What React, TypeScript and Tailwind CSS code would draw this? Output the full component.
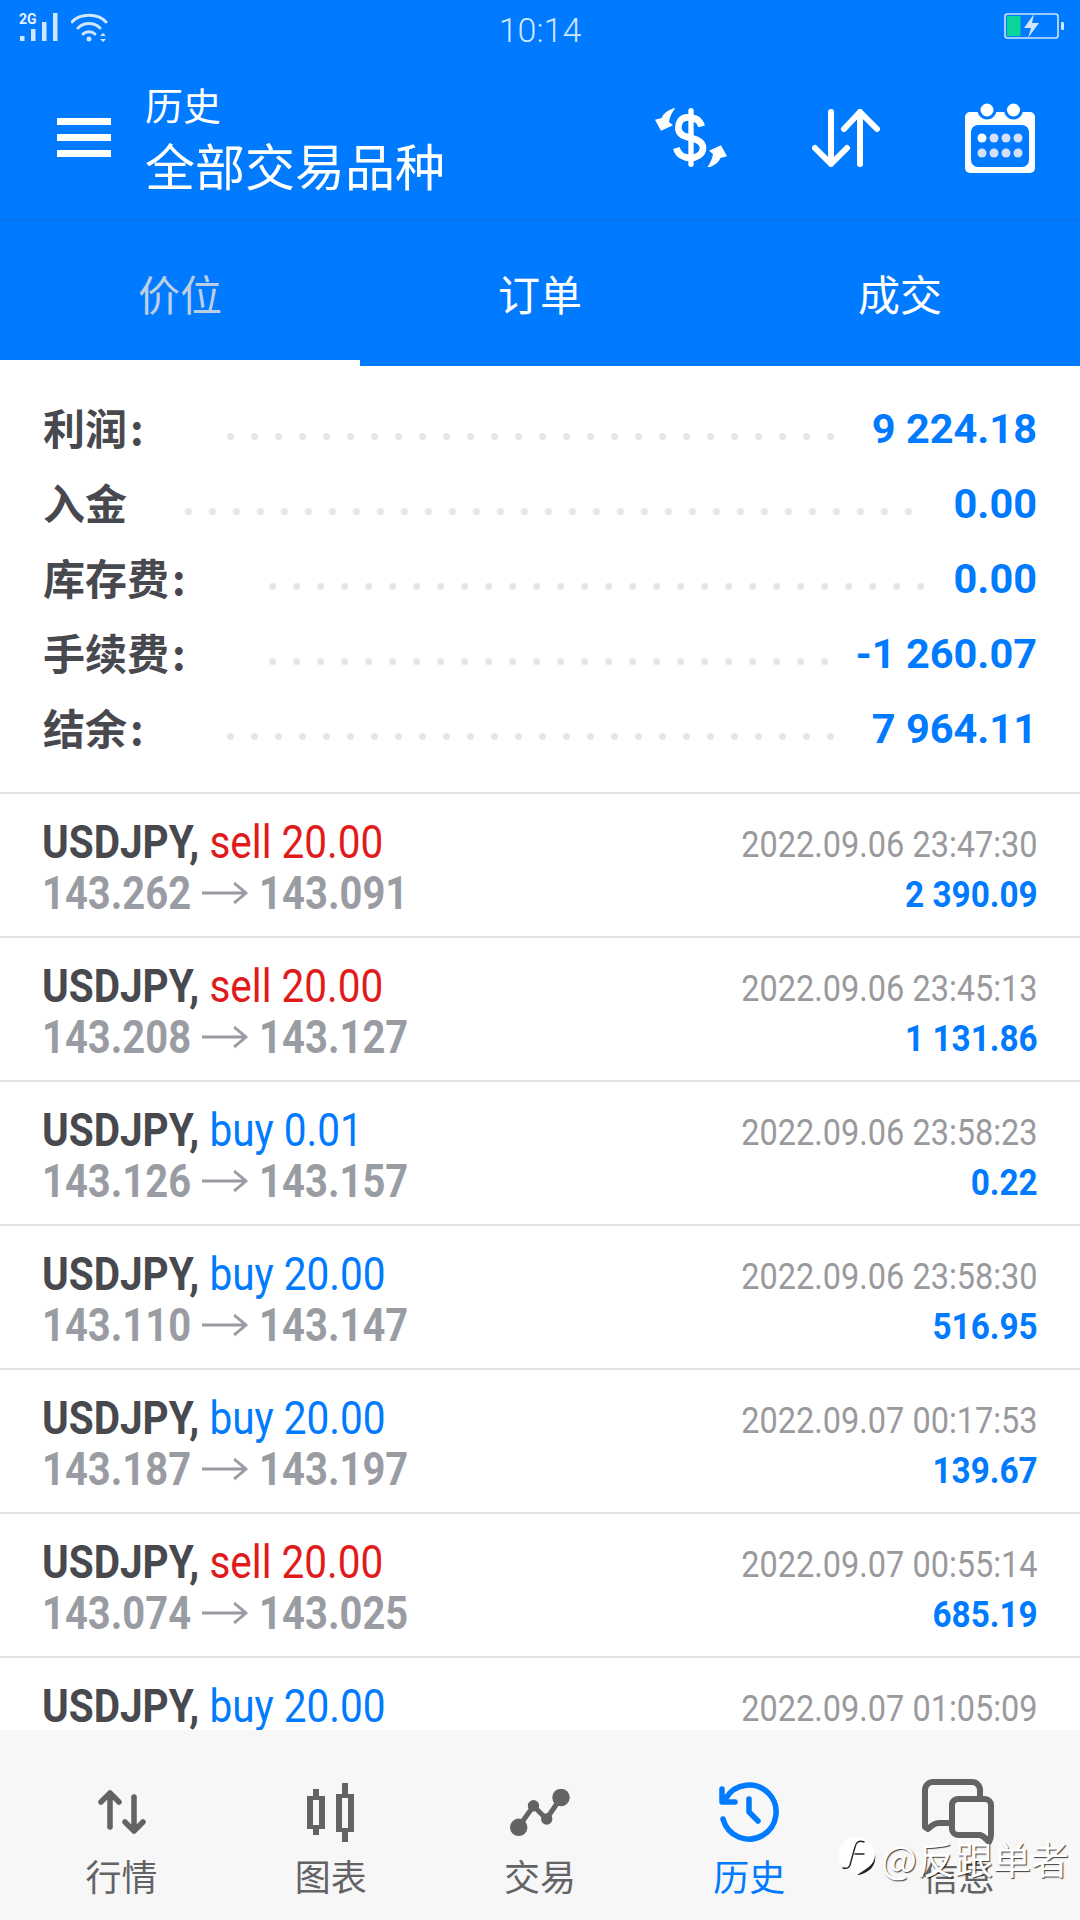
import { ReactNode } from "react";

const CJK = "font-['Noto_Sans_CJK_SC','Noto_Sans',sans-serif]";

const SUMMARY = [
  { label: "利润", colon: true, value: "9 224.18", dotsFrom: 230, dots: 26 },
  { label: "入金", colon: false, value: "0.00", dotsFrom: 188, dots: 31 },
  { label: "库存费", colon: true, value: "0.00", dotsFrom: 272, dots: 28 },
  { label: "手续费", colon: true, value: "-1 260.07", dotsFrom: 272, dots: 24 },
  { label: "结余", colon: true, value: "7 964.11", dotsFrom: 230, dots: 26 },
];

type Deal = { side: string; lots: string; time: string; open?: string; close?: string; profit?: string };

const DEALS: Deal[] = [
  { side: "sell", lots: "20.00", open: "143.262", close: "143.091", time: "2022.09.06 23:47:30", profit: "2 390.09" },
  { side: "sell", lots: "20.00", open: "143.208", close: "143.127", time: "2022.09.06 23:45:13", profit: "1 131.86" },
  { side: "buy", lots: "0.01", open: "143.126", close: "143.157", time: "2022.09.06 23:58:23", profit: "0.22" },
  { side: "buy", lots: "20.00", open: "143.110", close: "143.147", time: "2022.09.06 23:58:30", profit: "516.95" },
  { side: "buy", lots: "20.00", open: "143.187", close: "143.197", time: "2022.09.07 00:17:53", profit: "139.67" },
  { side: "sell", lots: "20.00", open: "143.074", close: "143.025", time: "2022.09.07 00:55:14", profit: "685.19" },
  { side: "buy", lots: "20.00", time: "2022.09.07 01:05:09" },
];

function SignalIcon() {
  return (
    <svg width="40" height="30" viewBox="0 0 40 30" fill="#cfe6ff" overflow="visible">
      <text x="0" y="10.5" fontSize="14" fontFamily="Roboto" fontWeight="700" fill="#e6f2ff">2G</text>
      <rect x="1" y="23" width="4.5" height="5" />
      <rect x="12" y="16" width="4.5" height="12" />
      <rect x="23" y="9" width="4.5" height="19" />
      <rect x="34" y="0" width="4.5" height="28" />
    </svg>
  );
}

function WifiIcon() {
  return (
    <svg width="38" height="30" viewBox="0 0 38 30" fill="none" stroke="#cfe6ff" strokeWidth="3" strokeLinecap="round">
      <path d="M1 9C9 0 27 0 35 9" />
      <path d="M7 15C13 9 23 9 29 15" />
      <path d="M12 21C15 18 21 18 24 21" />
      <circle cx="18" cy="26" r="2.5" fill="#cfe6ff" stroke="none" />
      <path d="M29 23l3-3 3 3zM29 26l3 3 3-3z" fill="#cfe6ff" stroke="none" />
    </svg>
  );
}

function BatteryIcon() {
  return (
    <svg width="60" height="26" viewBox="0 0 60 26">
      <rect x="1" y="1" width="53" height="24" rx="2.5" fill="none" stroke="#cfe6ff" strokeWidth="1.6" />
      <rect x="3" y="3" width="13.5" height="20" fill="#0bd69a" />
      <rect x="57" y="9" width="3" height="8" rx="1" fill="#cfe6ff" />
      <path d="M30 1L20 15h7l-3 10 11-15h-7z" fill="#cfe6ff" />
    </svg>
  );
}

function ExchangeIcon() {
  return (
    <svg width="72" height="59" viewBox="42 40 216 177" fill="#fff">
      <path
        d="M182 95C176 72 156 68 140 68C118 68 112 85 112 100C112 120 130 125 150 130C172 135 186 145 186 160C186 180 165 190 148 190C130 190 112 182 106 160"
        fill="none"
        stroke="#fff"
        strokeWidth="20"
      />
      <rect x="142" y="40" width="16" height="177" rx="8" />
      <path d="M103 40C84 44 66 56 62 70L42 75L60 108L96 92L84 82C86 68 92 54 103 40Z" />
      <path d="M197 220C216 216 234 204 238 190L258 185L240 152L204 168L216 178C214 192 208 206 197 220Z" />
    </svg>
  );
}

function SortIcon() {
  return (
    <svg width="68" height="58" viewBox="0 0 68 58" fill="none" stroke="#fff" strokeWidth="6" strokeLinecap="round" strokeLinejoin="round">
      <path d="M19 3v52M3 39l16 16 16-16" />
      <path d="M48 55V3M32 20L48 3l17 17" />
    </svg>
  );
}

function CalendarIcon() {
  const dots = [0, 1, 2, 3];
  return (
    <svg width="70" height="70" viewBox="0 0 70 70">
      <path fill="#fff" d="M5 9h60a5 5 0 0 1 5 5v51a5 5 0 0 1-5 5H5a5 5 0 0 1-5-5V14a5 5 0 0 1 5-5z" />
      <circle cx="22" cy="7" r="8" fill="#fff" stroke="#007aff" strokeWidth="3" />
      <circle cx="48.5" cy="7" r="8" fill="#fff" stroke="#007aff" strokeWidth="3" />
      <rect x="6" y="22" width="58" height="42" rx="7" fill="#007aff" />
      {dots.map((i) => (
        <circle key={`t${i}`} cx={17 + i * 12} cy="35" r="4.5" fill={i === 0 ? "#fff" : "#d3e0f7"} />
      ))}
      {dots.map((i) => (
        <circle key={`b${i}`} cx={17 + i * 12} cy="50" r="4.5" fill="#d3e0f7" />
      ))}
    </svg>
  );
}

function QuotesIcon() {
  return (
    <svg width="48" height="44" viewBox="0 0 48 44" fill="none" stroke="#636366" strokeLinecap="round" strokeLinejoin="round" strokeWidth="5.5">
      <path d="M12 37V3M3 12l9-9 9 9" />
      <path d="M36 7v34M27 32l9 9 9-9" />
    </svg>
  );
}

function ChartIcon() {
  return (
    <svg width="47" height="59" viewBox="0 0 47 59" fill="#636366">
      <rect x="6" y="6" width="6" height="46" />
      <rect x="0" y="13" width="18" height="33" />
      <rect x="6" y="17" width="6" height="25" fill="#f7f7f7" />
      <rect x="35" y="0" width="6" height="59" />
      <rect x="29" y="11" width="18" height="38" />
      <rect x="35" y="15" width="6" height="30" fill="#f7f7f7" />
    </svg>
  );
}

function TradeIcon() {
  return (
    <svg width="60" height="47" viewBox="0 0 60 47" fill="#636366">
      <path d="M8.5 38L23.5 17l13 13L51 8.5" fill="none" stroke="#636366" strokeWidth="5" />
      <circle cx="8.7" cy="38.3" r="8.7" />
      <circle cx="23.5" cy="16.7" r="5.7" />
      <circle cx="36.7" cy="30" r="5.7" />
      <circle cx="51" cy="8.5" r="8.7" />
    </svg>
  );
}

function HistoryIcon() {
  return (
    <svg width="62" height="62" viewBox="0 0 62 62" fill="none" stroke="#007aff" strokeWidth="5.5" strokeLinecap="round" strokeLinejoin="round">
      <path d="M5 38A27 27 0 1 0 8 17" />
      <path d="M4 8v13h13" />
      <path d="M31 18v13l9 9" />
    </svg>
  );
}

function MessageIcon() {
  return (
    <svg width="72" height="66" viewBox="0 0 72 66" fill="none" stroke="#636366" strokeWidth="6" strokeLinejoin="round">
      <path d="M58 17V11a8 8 0 0 0-8-8H11a8 8 0 0 0-8 8v37l3 2c3-3 6-6 11-6h13" />
      <path d="M37 20h26a6 6 0 0 1 6 6v30c0 3-1 5-2 7-3-3-5-6-9-7H36a6 6 0 0 1-6-6V26a6 6 0 0 1 7-6z" />
    </svg>
  );
}

function ZhihuMark() {
  return (
    <svg width="38" height="44" viewBox="0 0 38 44" fill="none">
      <circle cx="18.5" cy="18" r="18" fill="#fff" />
      <path d="M26 5c-5-2-8 0-9 5l-5 18c-1 3-3 4-7 3M17 17h9" stroke="#222" strokeWidth="1.4" strokeLinecap="round" />
      <path d="M37 17c0 6-2 10-9 15-3 2-6 4-9 6 4 0 8-2 11-4 6-4 8-10 7-17z" fill="#222" />
    </svg>
  );
}

function NavItem({ icon, label, active }: { icon: ReactNode; label: string; active?: boolean }) {
  return (
    <div className="flex flex-col items-center">
      <div className="flex h-[84px] items-center justify-center">{icon}</div>
      <span className={`mt-px text-[36px] leading-[40px] ${active ? "text-[#007aff]" : "text-[#636366]"}`}>{label}</span>
    </div>
  );
}

export default function App() {
  return (
    <div className={`relative flex h-[1920px] w-[1080px] flex-col overflow-hidden bg-white ${CJK}`}>
      {/* status bar + action bar */}
      <header className="bg-[#007aff] text-white">
        <div className="relative flex h-[62px] items-start justify-between pl-[19px] pr-[16px] pt-[13px]">
          <div className="flex items-center gap-[12px]">
            <SignalIcon />
            <WifiIcon />
          </div>
          <span className="absolute left-0 right-0 top-[8px] text-center font-['Roboto'] text-[34px] font-light leading-[44px] text-[#cfe6ff]">
            10:14
          </span>
          <BatteryIcon />
        </div>
        <div className="flex h-[158px] items-center border-b border-b-[#0b6fe0]">
          <div className="mb-[6px] ml-[57px] flex w-[54px] flex-col gap-[9px]">
            <div className="h-[7px] bg-white" />
            <div className="h-[7px] bg-white" />
            <div className="h-[7px] bg-white" />
          </div>
          <div className="ml-[34px] flex-1">
            <div className="text-[38px] leading-[46px]">历史</div>
            <div className="text-[50px] leading-[74px]">全部交易品种</div>
          </div>
          <div className="mb-[6px] mr-[45px] flex items-center gap-[85px]">
            <ExchangeIcon />
            <SortIcon />
            <CalendarIcon />
          </div>
        </div>
        <nav className="relative grid h-[146px] grid-cols-3 text-center text-[42px] leading-[146px]">
          <span className="text-[#bccde4]">价位</span>
          <span>订单</span>
          <span>成交</span>
          <div className="absolute bottom-0 left-0 h-[6px] w-[360px] bg-white" />
        </nav>
      </header>

      {/* account summary */}
      <section className="relative px-[43px] pb-[27px] pt-[24px]">
        {SUMMARY.map((row) => (
          <div key={row.label} className="relative flex h-[75px] items-center justify-between">
            <span className="-translate-y-px text-[42px] font-bold text-[#48484f]">
              {row.label}
              {row.colon && <span className="ml-[3px]">:</span>}
            </span>
            <div className="absolute top-[43px] flex gap-[17px]" style={{ left: row.dotsFrom - 43 - 3.5 }}>
              {Array.from({ length: row.dots }).map((_, i) => (
                <i key={i} className="h-[7px] w-[7px] rounded-full bg-[#e6e6e6]" />
              ))}
            </div>
            <span className="translate-y-[2px] font-['Roboto'] text-[41.5px] font-bold text-[#007aff]">{row.value}</span>
          </div>
        ))}
      </section>

      {/* closed deals */}
      <section className="min-h-0 flex-1 overflow-hidden font-['Roboto']">
        {DEALS.map((d, i) => (
          <div key={i} className="flex h-[144px] justify-between border-t-2 border-t-[#e2e2e2] pl-[42px] pr-[42px]">
            <div className="pt-[22px]">
              <div className="origin-left scale-x-[0.862] whitespace-nowrap text-[47px] leading-[51px]">
                <span className="font-bold text-[#48484f]">USDJPY, </span>
                <span className={d.side === "sell" ? "text-[#e01b1b]" : "text-[#007aff]"}>
                  {d.side} {d.lots}
                </span>
              </div>
              {d.open && (
                <div className="flex origin-left scale-x-[0.85] items-center whitespace-nowrap text-[47px] font-bold leading-[51px] text-[#9a9ca3]">
                  <span>{d.open}</span>
                  <svg width="54" height="24" viewBox="0 0 54 24" className="mx-[13px]" fill="none" stroke="#9a9ca3" strokeWidth="3">
                    <path d="M0 12h52M38 2l14 10-14 10" />
                  </svg>
                  <span>{d.close}</span>
                </div>
              )}
            </div>
            <div className="pt-[26px] text-right">
              <div className="origin-right scale-x-[0.902] whitespace-nowrap text-[36px] leading-[50px] text-[#9a9a9e]">{d.time}</div>
              {d.profit && (
                <div className="origin-right scale-x-[0.9] whitespace-nowrap text-[37px] font-bold leading-[50px] text-[#007aff]">{d.profit}</div>
              )}
            </div>
          </div>
        ))}
      </section>

      {/* bottom navigation */}
      <footer className="grid h-[190px] shrink-0 grid-cols-5 bg-[#f7f7f7] px-[17px] pt-[40px]">
        <NavItem icon={<QuotesIcon />} label="行情" />
        <NavItem icon={<ChartIcon />} label="图表" />
        <NavItem icon={<TradeIcon />} label="交易" />
        <NavItem icon={<HistoryIcon />} label="历史" active />
        <NavItem icon={<MessageIcon />} label="信息" />
      </footer>

      <div className="absolute left-[838px] top-[1837px] flex items-start gap-[5px] text-[38px] leading-[42px] text-white [text-shadow:1px_1px_1px_rgba(0,0,0,0.75)]">
        <ZhihuMark />
        <span>@反跟单者</span>
      </div>
    </div>
  );
}
